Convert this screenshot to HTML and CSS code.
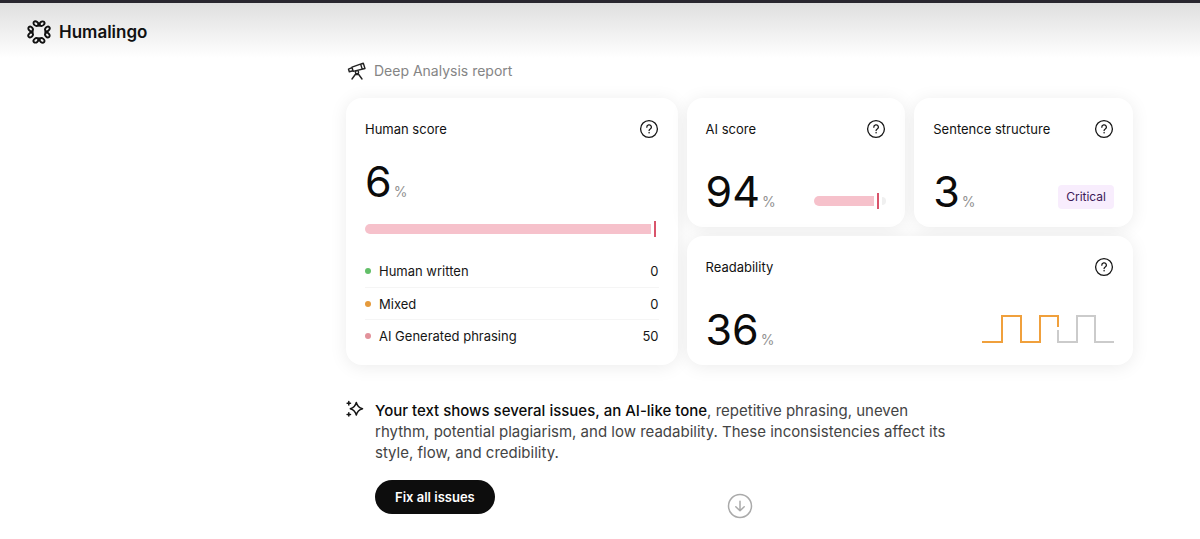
FILE: index.html
```
<!DOCTYPE html>
<html lang="en">
<head>
<meta charset="utf-8">
<title>Humalingo</title>
<link rel="stylesheet" href="styles.css">
</head>
<body>
<svg class="defs" aria-hidden="true">
  <symbol id="help" viewBox="0 0 20 20">
    <circle cx="10" cy="10" r="8.4" fill="none" stroke="currentColor" stroke-width="1.3"/>
    <path d="M7.8 8.2a2.3 2.2 0 1 1 3.5 1.8c-.8.5-1.2.8-1.2 1.6" fill="none" stroke="currentColor" stroke-width="1.3" stroke-linecap="round"/>
    <circle cx="10.1" cy="13.7" r=".8" fill="currentColor"/>
  </symbol>
</svg>
<header class="topbar">
  <a class="brand" href="#">
    <svg class="brand-logo" viewBox="0 0 24 24" fill="none" stroke="currentColor" stroke-width="1.9" aria-hidden="true">
      <g id="pair">
        <ellipse cx="8.9" cy="3.6" rx="2" ry="2.6" transform="rotate(-50 8.9 3.6)"/>
        <ellipse cx="15.1" cy="3.6" rx="2" ry="2.6" transform="rotate(50 15.1 3.6)"/>
        <path d="M10.500 5.300q1.500 .9 3 0"/>
      </g>
      <use href="#pair" transform="rotate(90 12 12)"/>
      <use href="#pair" transform="rotate(180 12 12)"/>
      <use href="#pair" transform="rotate(270 12 12)"/>
    </svg>
    Humalingo
  </a>
</header>
<main class="main">
  <div class="report">
    <h1 class="report-title">
      <svg class="icon-scope" viewBox="0 0 20 20" fill="none" stroke="currentColor" stroke-width="1.4" stroke-linejoin="round" stroke-linecap="round" aria-hidden="true">
        <path d="M5 6.2 16.3 2.2 18 7.5 6.2 10.4zM1.5 8.2 5 6.7 6 9.8 2.3 10.7zM13.7 3.2 15.2 8.1"/>
        <circle cx="10" cy="11.2" r="1.6"/>
        <path d="M9 12.5 5 18M11 12.5 15 18M8.6 13.5h2.8"/>
      </svg>
      Deep Analysis report
    </h1>
    <section class="cards">
      <article class="card card-human">
        <header class="card-head"><h2>Human score</h2><button class="help" aria-label="About human score"><svg><use href="#help"/></svg></button></header>
        <p class="score">6<span>%</span></p>
        <div class="meter"><i class="meter-fill"></i><i class="meter-mark"></i></div>
        <ul class="legend">
          <li class="green"><span>Human written</span><b>0</b></li>
          <li class="orange"><span>Mixed</span><b>0</b></li>
          <li class="pink"><span>AI Generated phrasing</span><b>50</b></li>
        </ul>
      </article>
      <article class="card">
        <header class="card-head"><h2>AI score</h2><button class="help" aria-label="About AI score"><svg><use href="#help"/></svg></button></header>
        <div class="card-foot">
          <p class="score">94<span>%</span></p>
          <div class="meter meter-small"><i class="meter-fill"></i><i class="meter-mark"></i><i class="meter-rest"></i></div>
        </div>
      </article>
      <article class="card">
        <header class="card-head"><h2>Sentence structure</h2><button class="help" aria-label="About sentence structure"><svg><use href="#help"/></svg></button></header>
        <div class="card-foot">
          <p class="score">3<span>%</span></p>
          <span class="tag">Critical</span>
        </div>
      </article>
      <article class="card card-wide">
        <header class="card-head"><h2>Readability</h2><button class="help" aria-label="About readability"><svg><use href="#help"/></svg></button></header>
        <div class="card-foot">
          <p class="score">36<span>%</span></p>
          <svg class="wave" viewBox="0 0 132 30" fill="none" stroke-width="2" aria-hidden="true">
            <path stroke="#f0a03c" d="M0 28H20V2H39V28H58V2H76V13"/>
            <path stroke="#cbcbcb" d="M76 16V28H95V2H113V28H132"/>
          </svg>
        </div>
      </article>
    </section>
    <section class="summary">
      <svg class="icon-spark" viewBox="0 0 18 18" fill="none" stroke="currentColor" stroke-width="1.5" stroke-linejoin="round" stroke-linecap="round" aria-hidden="true">
        <path d="M10.300 2.500Q11.500 7.300 16.500 8.800Q11.500 10.300 10.300 15Q9.100 10.300 4.300 8.800Q9.100 7.300 10.300 2.500Z"/>
        <path d="M2.800 1.500v3.400M1.100 3.200h3.400M2.800 12.700v3.400M1.100 14.400h3.400"/>
      </svg>
      <div class="summary-body">
        <p><strong>Your text shows several issues, an AI-like tone</strong>, repetitive phrasing, uneven rhythm, potential plagiarism, and low readability. These inconsistencies affect its style, flow, and credibility.</p>
        <button class="fix">Fix all issues</button>
      </div>
    </section>
    <button class="scroll-down" aria-label="Scroll down">
      <svg viewBox="0 0 26 26" fill="none" stroke="currentColor" stroke-width="1.5" stroke-linecap="round" stroke-linejoin="round"><circle cx="13" cy="13" r="11.500"/><path d="M13 8.300v9.400M8.800 13.800l4.200 4 4.200-4"/></svg>
    </button>
  </div>
</main>
</body>
</html>
```
FILE: styles.css
```
* { box-sizing: border-box; margin: 0; padding: 0; }
body { font-family: Inter, sans-serif; font-size: 13px; line-height: 20px; color: #111; background: #fff; }
button { border: 0; background: none; font: inherit; color: inherit; cursor: pointer; }
.defs { display: none; }

.topbar { border-top: 3px solid #29262f; padding: 16px 27px; height: 58px; background: linear-gradient(#dfdfdf, #fff); }
.brand { display: inline-flex; align-items: center; gap: 8px; font-size: 17px; line-height: 26px; font-weight: 600; color: #111; text-decoration: none; }
.brand-logo { width: 24px; height: 24px; }

.main { padding-left: 279px; }
.report { width: 100%; max-width: 787px; margin: 0 auto; padding-bottom: 25px; position: relative; }
.report-title { display: flex; align-items: center; gap: 7px; padding: 3px 0 0 1px; font-size: 14px; font-weight: 400; color: #858585; }
.icon-scope { width: 20px; height: 20px; color: #222; }

.cards { display: grid; grid-template-columns: 332fr 219fr 219fr; grid-template-rows: repeat(2, minmax(129px, auto)); gap: 9px; margin-top: 17px; }
.card { display: flex; flex-direction: column; padding: 21px 19px 14px; border-radius: 16px; background: #fff; box-shadow: 0 2px 18px rgba(0, 0, 0, 0.08); }
.card-human { grid-row: span 2; }
.card-wide { grid-column: span 2; }
.card-head { display: flex; justify-content: space-between; align-items: center; }
.card-head h2 { font-size: 13px; font-weight: 400; }
.help { display: flex; color: #161616; }
.help svg { width: 20px; height: 20px; }
.card-foot { display: flex; justify-content: space-between; align-items: flex-end; margin-top: auto; }
.score { display: flex; align-items: baseline; gap: 2px; font-size: 43px; line-height: 44px; color: #0b0b0b; }
.score span { font-size: 14px; line-height: 20px; color: #929292; }
.card-human .score { margin-top: 20px; }

.meter { display: flex; align-items: center; gap: 3px; height: 16px; }
.meter-fill { flex: 1; height: 10px; border-radius: 5px 0 0 5px; background: #f6c1cb; }
.meter-mark { width: 2px; height: 16px; background: #d9546b; }
.meter-rest { width: 4px; height: 8px; border-radius: 0 4px 4px 0; background: #f0f0f0; }
.card-human .meter { margin: 18px 3px 18px 0; }
.meter-small { width: 72px; margin-bottom: 4px; }

.legend { list-style: none; }
.legend li { display: flex; align-items: center; gap: 8px; height: 32px; }
.legend li + li { border-top: 1px solid #f5f5f5; }
.legend li::before { content: ""; width: 6px; height: 6px; border-radius: 50%; background: currentColor; }
.legend span, .legend b { color: #161616; font-weight: 400; }
.legend b { margin-left: auto; }
.green { color: #62bf68; }
.orange { color: #e59a3c; }
.pink { color: #e2929b; }

.tag { padding: 2px 8px; border-radius: 4px; margin-bottom: 4px; font-size: 12px; background: #f8edfd; color: #3d1a58; }
.wave { width: 132px; height: 30px; margin-bottom: 7px; }

.summary { display: flex; gap: 11px; margin-top: 35px; }
.icon-spark { flex: none; width: 18px; height: 18px; color: #161616; }
.summary p { max-width: 590px; font-size: 15px; line-height: 21px; color: #444; }
.summary strong { font-weight: 500; color: #0b0b0b; }
.fix { margin-top: 17px; padding: 7px 20px; border-radius: 17px; font-size: 13px; font-weight: 600; background: #0d0d0d; color: #fff; }
.scroll-down { position: absolute; left: 50%; bottom: 20px; width: 26px; height: 26px; transform: translateX(-50%); color: #aaa; }
```
